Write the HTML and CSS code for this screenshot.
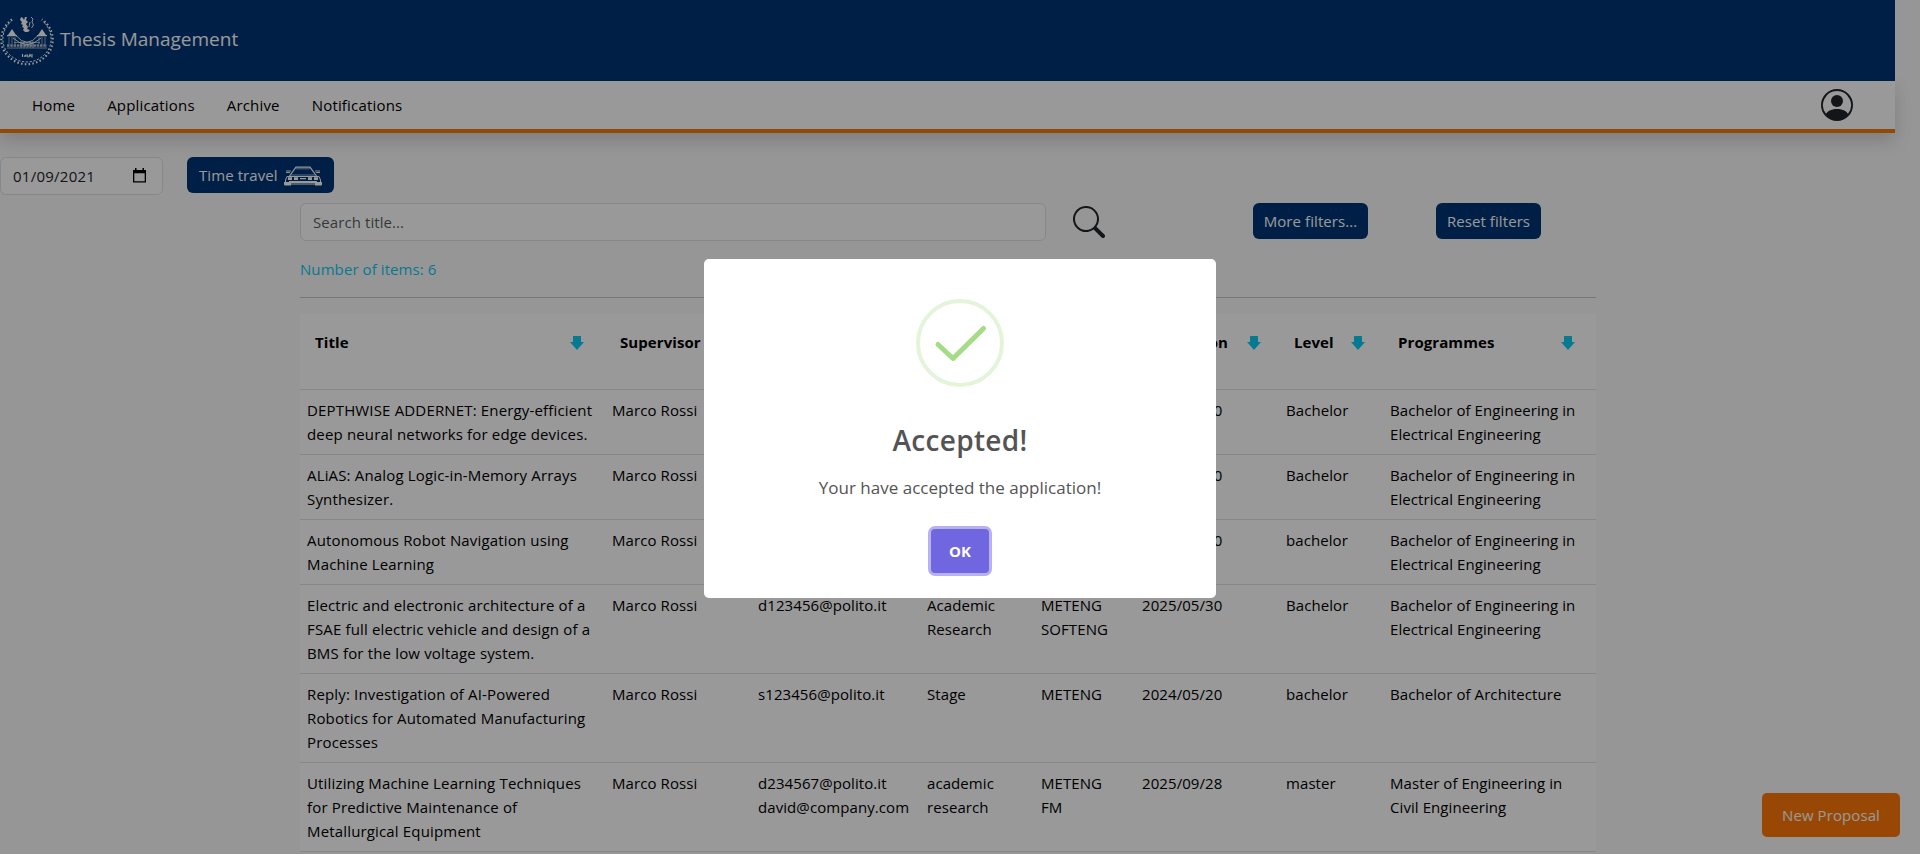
FILE: index.html
```html
<!DOCTYPE html>
<html lang="en">
<head>
<meta charset="utf-8">
<title>Thesis Management</title>
<link rel="stylesheet" href="styles.css">
</head>
<body>
<svg class="defs" aria-hidden="true">
  <symbol id="arrow" viewBox="0 0 14 14"><path d="M3 0h8v6h3L7 14 0 6h3z"/></symbol>
</svg>
<div class="page">
  <header class="brand">
    <svg class="emblem" viewBox="0 0 54 50">
      <g fill="none" stroke="#fff">
        <path d="M12 3.500C-1 13-2 30 8 40c11 11 27 11 38 0 10-10 9-27-4-36.500" stroke-width="2.200" stroke-dasharray="1.500 2.300"/>
        <path d="M11 5.500C1 14 0 30 9.500 38.500c10 10 25 10 35 0C54 30 53 14 43 5.500" stroke-width="1" stroke-dasharray="2.200 1.600" stroke-dashoffset="1.500"/>
        <path d="M16 19.500Q27 33 38 19.500M13 22q14 13 28 0" stroke-width=".9"/>
        <path d="M7 29.500h40" stroke-width="2.600" stroke-dasharray="2.500 .8" stroke-opacity=".7"/>
        <path d="M7 32h40M14 26.500h26" stroke-width=".6"/>
        <path d="M9 21v7M12 21v7M15 21v7M39 21v7M42 21v7M45 21v7" stroke-width=".8" stroke-opacity=".7"/>
        <path d="M21 25v7M24 26v6M27 27v5M30 26v6M33 25v7" stroke-width=".8" stroke-opacity=".7"/>
        <path d="M22.500 38v3M24 40.500l2-1.500v2M27.500 38.500l.5 3M29 41l1-2.500 1 2M32 38v3.500" stroke-width="1.100"/>
        <path d="M31 1l2 2-1 3 1.500 3-2 3M30 6l-1 5" stroke-width=".9"/>
      </g>
      <path fill="#fff" d="M12 13l4 6H8zM42 13l4 6h-8zM7 19h10v1.200H7zM37 19h10v1.200H37zM21 1l2 1 1 2 1-3 2 0-1 3 2 2-2 2 2 3-1 2 3 1-2 2-3 0-2-2 1-2-2-1 1-2-2-1 1-2-2-2z"/>
    </svg>
    <span class="brand-name">Thesis Management</span>
  </header>
  <nav class="nav">
    <a>Home</a><a>Applications</a><a>Archive</a><a>Notifications</a>
    <svg class="user" viewBox="0 0 16 16"><path d="M11 6a3 3 0 1 1-6 0 3 3 0 0 1 6 0"/><path fill-rule="evenodd" d="M0 8a8 8 0 1 1 16 0A8 8 0 0 1 0 8m8-7a7 7 0 0 0-5.468 11.370C3.242 11.226 4.805 10 8 10s4.757 1.225 5.468 2.370A7 7 0 0 0 8 1"/></svg>
  </nav>
  <div class="clock">
    <div class="field date"><span>01/09/2021</span>
      <svg viewBox="0 0 13 15"><path fill-rule="evenodd" d="M0 2h2V0h1.500v2h6V0H11v2h2v12.500H0zM1.300 5.200v8h10.400v-8z"/></svg>
    </div>
    <button class="btn travel">Time travel
      <svg viewBox="0 0 38 21"><g fill="none" stroke="#fff"><path d="M5.500 10L12 1.200h14L32.500 10" stroke-width="1.200"/><path d="M3 10.500h32l1.500 3.500v2.500H1.500V14z" stroke-width="1"/><path d="M2 5h5M31 5h5M2 6.500h4M32 6.500h4" stroke-width=".9"/><path d="M12 2.800h14M7 9h24" stroke-width=".6"/></g><path fill="#fff" d="M0 16h7v1.500h24V16h7v2.500q0 1-1 1h-6V18.600H7v.9H1q-1 0-1-1zM4 11.300h4v2.700H4zM10 11.300h4v2.700h-4zM24 11.300h4v2.700h-4zM30 11.300h4v2.700h-4zM16 12h6v1.300h-6zM5 15h28v1H5z"/></svg>
    </button>
  </div>
  <main class="main">
    <div class="filters">
      <input class="field search" placeholder="Search title...">
      <svg class="glass" viewBox="0 0 16 16"><path d="M11.742 10.344a6.500 6.500 0 1 0-1.397 1.398h-.001q.044.060.098.115l3.850 3.850a1 1 0 0 0 1.415-1.414l-3.850-3.850a1 1 0 0 0-.115-.100zM12 6.500a5.500 5.500 0 1 1-11 0 5.500 5.500 0 0 1 11 0"/></svg>
      <button class="btn more">More filters...</button>
      <button class="btn reset">Reset filters</button>
    </div>
    <p class="count">Number of items: 6</p>
    <hr class="rule">
    <table class="table">
      <colgroup><col class="c1"><col class="c2"><col class="c3"><col class="c4"><col class="c5"><col class="c6"><col class="c7"><col class="c8"></colgroup>
      <thead><tr>
        <th><div>Title<svg><use href="#arrow"/></svg></div></th>
        <th><div>Supervisor<svg><use href="#arrow"/></svg></div></th>
        <th><div>Co-supervisors</div></th>
        <th><div>Type</div></th>
        <th><div>Groups</div></th>
        <th class="tight"><div>Expiration<svg><use href="#arrow"/></svg></div></th>
        <th class="tight"><div>Level<svg><use href="#arrow"/></svg></div></th>
        <th><div>Programmes<svg><use href="#arrow"/></svg></div></th>
      </tr></thead>
      <tbody>
        <tr><td>DEPTHWISE ADDERNET: Energy-efficient<br>deep neural networks for edge devices.</td><td>Marco Rossi</td><td></td><td></td><td></td><td>2025/05/30</td><td>Bachelor</td><td>Bachelor of Engineering in<br>Electrical Engineering</td></tr>
        <tr><td>ALiAS: Analog Logic-in-Memory Arrays<br>Synthesizer.</td><td>Marco Rossi</td><td></td><td></td><td></td><td>2025/05/30</td><td>Bachelor</td><td>Bachelor of Engineering in<br>Electrical Engineering</td></tr>
        <tr><td>Autonomous Robot Navigation using<br>Machine Learning</td><td>Marco Rossi</td><td></td><td></td><td></td><td>2025/05/30</td><td>bachelor</td><td>Bachelor of Engineering in<br>Electrical Engineering</td></tr>
        <tr><td>Electric and electronic architecture of a<br>FSAE full electric vehicle and design of a<br>BMS for the low voltage system.</td><td>Marco Rossi</td><td>d123456@polito.it</td><td>Academic<br>Research</td><td>METENG<br>SOFTENG</td><td>2025/05/30</td><td>Bachelor</td><td>Bachelor of Engineering in<br>Electrical Engineering</td></tr>
        <tr><td>Reply: Investigation of AI-Powered<br>Robotics for Automated Manufacturing<br>Processes</td><td>Marco Rossi</td><td>s123456@polito.it</td><td>Stage</td><td>METENG</td><td>2024/05/20</td><td>bachelor</td><td>Bachelor of Architecture</td></tr>
        <tr><td>Utilizing Machine Learning Techniques<br>for Predictive Maintenance of<br>Metallurgical Equipment</td><td>Marco Rossi</td><td>d234567@polito.it<br>david@company.com</td><td>academic<br>research</td><td>METENG<br>FM</td><td>2025/09/28</td><td>master</td><td>Master of Engineering in<br>Civil Engineering</td></tr>
      </tbody>
    </table>
  </main>
</div>
<button class="proposal">New Proposal</button>
<div class="overlay">
  <div class="dialog" role="dialog">
    <svg class="success" viewBox="0 0 88 88" fill="none">
      <circle cx="44" cy="44" r="42" stroke="#a5dc86" stroke-opacity=".3" stroke-width="4"/>
      <path d="M22 45.500L37 59.500 67.500 29.500" stroke="#a5dc86" stroke-width="5" stroke-linecap="round" stroke-linejoin="round"/>
    </svg>
    <h2>Accepted!</h2>
    <p>Your have accepted the application!</p>
    <button class="ok">OK</button>
  </div>
</div>
</body>
</html>
```
FILE: styles.css
```css
* { box-sizing: border-box; }
body {
  margin: 0;
  height: 854px;
  overflow: hidden;
  background: #fafafa;
  color: #212529;
  font: 15px/24px "Segoe UI", "Open Sans", sans-serif;
  letter-spacing: .08px;
}
button, input { font: inherit; letter-spacing: inherit; }
.defs { display: none; }
.page { width: 1895px; }

.brand {
  display: flex;
  align-items: center;
  height: 81px;
  background: #003576;
  color: #fff;
}
.emblem { width: 54px; height: 50px; }
.brand-name { margin: -3px 0 0 6px; font-size: 19px; letter-spacing: 0; }

.nav {
  display: flex;
  align-items: center;
  gap: 32px;
  height: 52px;
  padding: 0 42px 0 32px;
  background: #fff;
  border-bottom: 4px solid #f37a0c;
  box-shadow: 0 8px 16px rgba(0, 0, 0, .15);
  color: #000;
  letter-spacing: .18px;
}
.user { width: 32px; height: 32px; margin-left: auto; fill: #212529; }

.clock { display: flex; align-items: flex-start; gap: 24px; margin-top: 24px; }
.field {
  height: 38px;
  padding: 0 12px;
  background: #fff;
  border: 1px solid #dee2e6;
  border-radius: 6px;
}
.date {
  display: flex;
  align-items: center;
  justify-content: space-between;
  width: 163px;
  padding-right: 16px;
  letter-spacing: .25px;
}
.date svg { width: 13px; height: 15px; margin-top: -2px; fill: #000; }
.btn {
  height: 36px;
  padding: 0 0 1px;
  border: 0;
  border-radius: 6px;
  background: #003576;
  color: #fff;
  text-align: center;
}
.travel {
  display: flex;
  align-items: center;
  justify-content: space-between;
  width: 147px;
  padding: 0 12px 1px;
}
.travel svg { width: 38px; height: 21px; margin-top: 4px; }

.main { width: 1296px; margin: 8px 0 0 300px; }
.filters { display: flex; align-items: flex-start; }
.search { width: 746px; outline: 0; }
.search::placeholder { color: rgba(33, 37, 41, .75); opacity: 1; }
.glass { width: 32px; height: 32px; margin: 3px 0 0 27px; fill: #212529; }
.more { width: 115px; margin-left: 148px; }
.reset { width: 105px; margin-left: 68px; }
.count { margin: 16px 0; color: #0dcaf0; }
.rule { margin: 0 0 16px; border: 0; border-top: 1px solid #c5c6c7; }

.table {
  width: 1296px;
  table-layout: fixed;
  border-collapse: collapse;
  background: #fff;
  color: #000;
}
.c1 { width: 305px; }
.c2 { width: 146px; }
.c3 { width: 169px; }
.c4 { width: 114px; }
.c5 { width: 101px; }
.c6 { width: 144px; }
.c7 { width: 104px; }
.c8 { width: 213px; }
.table td, .table th {
  padding: 8px 0 8px 7px;
  border-bottom: 1px solid #dee2e6;
  text-align: left;
  vertical-align: top;
  white-space: nowrap;
}
.table td:first-child { letter-spacing: .16px; }
.table th { height: 75px; padding: 16px 21px 0 15px; font-weight: 700; }
.table th.tight { padding-right: 18px; }
.table th div { display: flex; align-items: center; justify-content: space-between; }
.table th svg { flex: none; width: 14px; height: 14px; margin-top: 2px; fill: #0dcaf0; }

.proposal {
  position: fixed;
  right: 20px;
  bottom: 17px;
  width: 138px;
  height: 44px;
  border: 0;
  border-radius: 5px;
  background: #fd7908;
  color: #fff;
}

.overlay {
  position: fixed;
  inset: 0;
  display: grid;
  place-items: center;
  background: rgba(0, 0, 0, .4);
}
.dialog {
  display: flex;
  flex-direction: column;
  align-items: center;
  width: 512px;
  height: 339px;
  margin-top: 3px;
  padding-top: 40px;
  border-radius: 5px;
  background: #fff;
  color: #545454;
}
.success { width: 88px; height: 88px; }
.dialog h2 { margin: 35px 0 0; font-size: 28px; line-height: 36px; font-weight: 600; letter-spacing: .3px; }
.dialog p { margin: 18px 0 0; font-size: 17px; line-height: 24px; letter-spacing: 0; }
.ok {
  width: 58px;
  height: 44px;
  margin-top: 29px;
  padding: 0;
  border: 0;
  border-radius: 4px;
  background: #7066e0;
  box-shadow: 0 0 0 3px rgba(112, 102, 224, .5);
  color: #fff;
  font-weight: 700;
}
```
